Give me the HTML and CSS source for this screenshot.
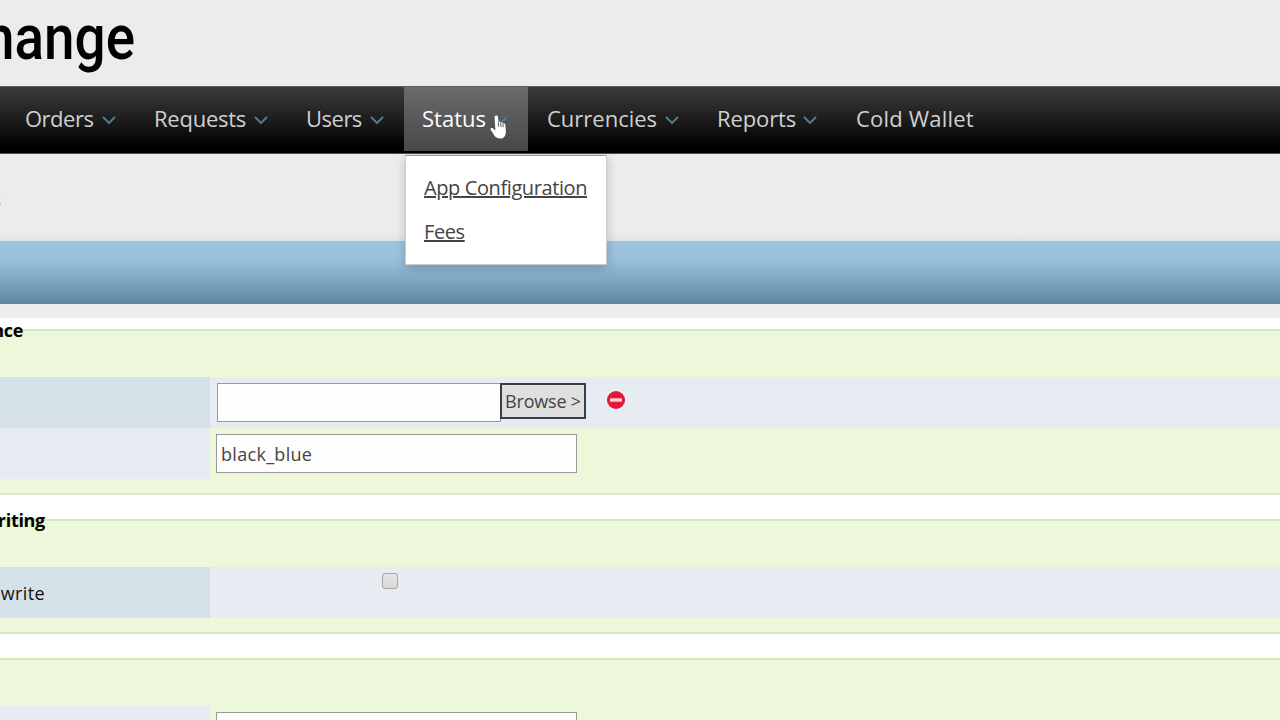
FILE: index.html
```html
<!DOCTYPE html>
<html>
<head>
    <title>App Configuration</title>
    <meta charset="utf-8" />
    <link rel="stylesheet" href="styles.css">
</head>
<body>
    <div class="header">
        <svg class="logo" width="140" height="86">
            <text x="-16" y="59" textLength="151" lengthAdjust="spacingAndGlyphs">hange</text>
        </svg>
    </div>

    <ul class="nav">
        <li class="orders"><span>Orders</span><svg class="arrow" viewBox="0 0 14 8"><path d="M1 1l6 6 6-6" /></svg></li>
        <li class="requests"><span>Requests</span><svg class="arrow" viewBox="0 0 14 8"><path d="M1 1l6 6 6-6" /></svg></li>
        <li class="users"><span>Users</span><svg class="arrow" viewBox="0 0 14 8"><path d="M1 1l6 6 6-6" /></svg></li>
        <li class="status active"><span>Status</span><svg class="arrow" viewBox="0 0 14 8"><path d="M1 1l6 6 6-6" /></svg>
            <div class="submenu">
                <a class="config">App Configuration</a>
                <a class="fees">Fees</a>
            </div>
            <svg class="cursor" width="18" height="26" viewBox="0 0 18 26">
                <path d="M6.200 1.500c1-.1 1.700.6 1.800 1.600l.4 5.200c.9-.6 1.900-.3 2.200.5.9-.6 1.900-.2 2.300.6 1.200-.5 2.300.2 2.400 1.400l.5 5.400c.4 4.900-1.400 8.300-5.600 8.300-3.500.1-5.200-1.500-6.800-4.400L.7 15.700c-.6-1.400 1.200-2.200 2.400-1.200l2.300 2L4.600 3.300c-.1-1 .6-1.700 1.600-1.800z" />
                <path class="fingers" d="M8.300 8.300l.3 4.300M10.700 9l.3 3.900M13 9.700l.2 3.500" />
            </svg>
        </li>
        <li class="currencies"><span>Currencies</span><svg class="arrow" viewBox="0 0 14 8"><path d="M1 1l6 6 6-6" /></svg></li>
        <li class="reports"><span>Reports</span><svg class="arrow" viewBox="0 0 14 8"><path d="M1 1l6 6 6-6" /></svg></li>
        <li class="wallet"><span>Cold Wallet</span></li>
    </ul>

    <div class="crumb"><span>s</span></div>
    <div class="titlebar"></div>

    <div class="content">
        <div class="group">
            <div class="legend first"><b>nce</b></div>
            <div class="row odd">
                <div class="label"></div>
                <div class="value">
                    <input type="text" class="file">
                    <button class="browse">Browse &gt;</button>
                    <svg class="remove" width="18" height="18" viewBox="0 0 18 18">
                        <circle cx="9" cy="9" r="9" />
                        <rect x="3" y="7.300" width="12" height="3.400" />
                    </svg>
                </div>
            </div>
            <div class="row even">
                <div class="label"></div>
                <div class="value"><input type="text" class="theme" value="black_blue"></div>
            </div>
        </div>

        <div class="group">
            <div class="legend second"><b>riting</b></div>
            <div class="row odd">
                <div class="label"><span>write</span></div>
                <div class="value"><span class="check"></span></div>
            </div>
        </div>

        <div class="group">
            <div class="legend"></div>
            <div class="row even">
                <div class="label"></div>
                <div class="value"><input type="text" class="theme"></div>
            </div>
        </div>
    </div>
</body>
</html>
```
FILE: styles.css
```css
* {
    box-sizing: border-box;
}

body {
    margin: 0;
    height: 720px;
    overflow: hidden;
    background: #ececec;
    color: #444;
    font-family: "Open Sans", "Noto Sans", sans-serif;
}

.header {
    height: 86px;
}

.logo {
    display: block;
}

.logo text {
    font-family: Roboto, sans-serif;
    font-size: 63px;
    font-weight: 500;
    fill: #000;
}

.nav {
    display: flex;
    height: 68px;
    margin: 0;
    padding: 0 0 0 7px;
    list-style: none;
    border-top: 1px solid #5c5c5c;
    border-bottom: 1px solid #4a4a4a;
    background: linear-gradient(#3b3b3b, #1c1c1c 50%, #000 92%);
}

.nav li {
    position: relative;
    display: flex;
    align-items: center;
    height: 64px;
    padding-left: 18px;
    color: #d0d0d0;
    font-size: 22px;
    letter-spacing: -0.5px;
    white-space: nowrap;
}

.nav li > span {
    padding-bottom: 2px;
}

.orders { width: 129px; }
.nav .requests { width: 152px; letter-spacing: -0.25px; }
.users { width: 116px; }
.nav .status { width: 124px; letter-spacing: 0; }
.nav .currencies { width: 171px; padding-left: 19px; letter-spacing: 0; }
.nav .reports { width: 138px; letter-spacing: -0.1px; }
.nav .wallet { width: 160px; padding-left: 19px; letter-spacing: 0.2px; }

.nav li.active {
    color: #fff;
    background: linear-gradient(#6a6a6a, #484848);
}

.arrow {
    width: 14px;
    height: 8px;
    margin-top: 2px;
    margin-left: auto;
    margin-right: 20px;
    fill: none;
    stroke: #527b90;
    stroke-width: 2;
}

.submenu {
    position: absolute;
    left: 1px;
    top: 68px;
    display: flex;
    flex-direction: column;
    width: 202px;
    height: 110px;
    padding: 10px 0 0 18px;
    border: 1px solid #ccc;
    border-top-color: #999;
    background: #fff;
    box-shadow: 0 3px 10px rgba(0,0,0,0.2);
}

.submenu a {
    height: 44px;
    line-height: 44px;
    color: #444;
    font-size: 20px;
    letter-spacing: -0.4px;
    text-decoration: underline;
}

.cursor {
    position: absolute;
    left: 86px;
    top: 27px;
    fill: #fff;
}

.fingers {
    fill: none;
    stroke: #555;
}

.crumb {
    height: 87px;
    padding-top: 34px;
    background: linear-gradient(#ececec 90%, #e2e2e2);
    color: #5a9bd5;
    font-size: 18px;
}

.crumb span {
    display: flex;
    justify-content: flex-end;
    width: 1px;
    overflow: hidden;
}

.titlebar {
    height: 63px;
    background: linear-gradient(#9dc4de, #9ac2db 28%, #7ba6c0 64%, #5e869f);
}

.content {
    height: 416px;
    padding-top: 11px;
    border-top: 14px solid #eeebed;
    background: #fff;
    overflow: hidden;
}

.group {
    margin-bottom: 24px;
    padding-bottom: 14px;
    border-top: 2px solid #d5e8ba;
    border-bottom: 2px solid #d9e8c0;
    background: #ecf8d9;
}

.legend {
    height: 46px;
    color: #000;
    font-size: 18px;
    line-height: 24px;
    letter-spacing: -0.3px;
}

/* sits across the top border of the group */
.legend b {
    display: flex;
    justify-content: flex-end;
    position: relative;
    top: -13px;
    font-weight: 700;
}

.first b { width: 23px; }
.second b { width: 45px; }

.row {
    display: flex;
    height: 51px;
}

.label {
    width: 210px;
    background: #d5e1e9;
    color: #111;
    font-size: 18px;
    line-height: 52px;
    letter-spacing: 0.4px;
}

.label span {
    display: flex;
    justify-content: flex-end;
    width: 45px;
}

.value {
    flex: 1;
    display: flex;
    align-items: flex-start;
    padding: 6px;
    background: #e7ecf3;
}

.even .label {
    background: #e7ecf3;
}

.even .value {
    background: none;
}

input {
    height: 39px;
    padding: 0 4px;
    border: 1px solid #999;
    background: #fdfdfd;
    color: #444;
    font: 18px "Open Sans", "Noto Sans", sans-serif;
    letter-spacing: 0.3px;
}

.file {
    width: 284px;
    margin-left: 1px;
}

.theme {
    width: 361px;
}

.browse {
    width: 86px;
    height: 36px;
    margin-left: -1px;
    padding: 0;
    border: 2px solid #3c3e44;
    background: #dfdfdf;
    color: #444;
    font: 18px "Open Sans", "Noto Sans", sans-serif;
    letter-spacing: -0.2px;
}

.remove {
    margin: 8px 0 0 21px;
    fill: #e5173a;
}

.remove rect {
    fill: #f8d5d8;
}

.check {
    width: 16px;
    height: 16px;
    margin-left: 166px;
    border: 1px solid #a5a5a5;
    border-radius: 3px;
    background: linear-gradient(#e5e5e5, #d9d9d9);
}
```
